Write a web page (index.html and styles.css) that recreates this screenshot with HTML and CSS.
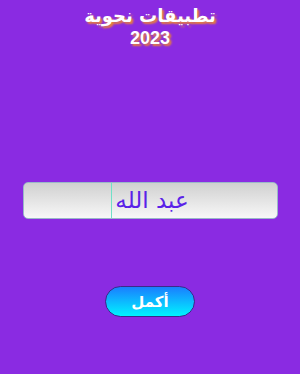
FILE: index.html
```html
<!DOCTYPE html>
<html lang="ar">
<head>
<meta charset="utf-8">
<link rel="stylesheet" href="styles.css">
</head>
<body>
<div class="page">
  <h1 class="title">تطبيقات نحوية<br><span class="year">2023</span></h1>
  <div class="field"><span class="caret"></span><span class="value" dir="rtl">عبد الله</span></div>
  <button class="next" dir="rtl">أكمل</button>
</div>
</body>
</html>
```
FILE: styles.css
```css
html, body {
  margin: 0;
  padding: 0;
  background: #8a2be2;
}
.page {
  width: 300px;
  height: 374px;
  display: flex;
  flex-direction: column;
  align-items: center;
  font-family: "Liberation Sans", Arial, sans-serif;
}
.title {
  margin: 5px 0 0 0;
  font-family: "DejaVu Sans", sans-serif;
  font-size: 18px;
  line-height: 22px;
  font-weight: bold;
  color: #ffffff;
  text-align: center;
  text-shadow: 2px 2px 2px #e8803a;
}
.year {
  font-family: "Liberation Sans", Arial, sans-serif;
  font-size: 18px;
}
.field {
  margin-top: 133px;
  width: 253px;
  height: 35px;
  border: 1px solid #9ab8c8;
  border-radius: 5px;
  background: linear-gradient(to bottom, #d0d0d0, #f8f8f8);
  display: flex;
  align-items: center;
  justify-content: center;
  box-sizing: content-box;
}
.caret {
  width: 1px;
  height: 35px;
  background: #6fe0c8;
}
.value {
  font-family: "DejaVu Sans", sans-serif;
  font-size: 23px;
  color: #5a22e8;
  padding-left: 3px;
  line-height: 35px;
}
.next {
  margin-top: 67px;
  width: 90px;
  height: 31px;
  border: 1px solid #3a2a8a;
  border-radius: 16px;
  background: linear-gradient(to bottom, #1a7eff, #00f4ff);
  color: #ffffff;
  font-family: "DejaVu Sans", sans-serif;
  font-weight: bold;
  font-size: 15px;
  padding: 0;
}
```
